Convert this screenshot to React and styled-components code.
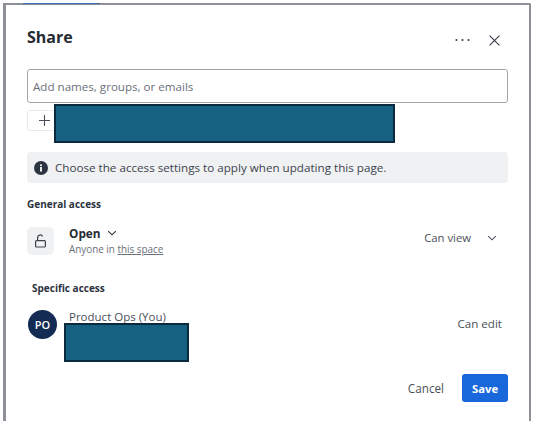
import React from 'react';
import styled, { createGlobalStyle } from 'styled-components';

const Global = createGlobalStyle`
  html, body { margin: 0; padding: 0; background: #fff; }
  body { width: 540px; height: 425px; overflow: hidden; font-family: "Open Sans", "Noto Sans", sans-serif; color: #2c3340; }
`;
const Page = styled.div`
  position: relative;
  width: 540px;
  height: 425px;
  padding: 3px 9px 0 3px;
  box-sizing: border-box;
`;
const TopAccent = styled.div`
  position: absolute;
  left: 23px;
  top: 3px;
  width: 77px;
  height: 1px;
  background: #3d6cb0;
`;
const Dialog = styled.section`
  height: 418px;
  box-sizing: border-box;
  background: #fff;
  border: solid #8d9097;
  border-width: 2px 2px 0 3px;
  border-top-right-radius: 2px;
  padding: 0 21px 0 21px;
  display: flex;
  flex-direction: column;
`;
const Header = styled.header`
  height: 64px;
  display: flex;
  align-items: center;
  justify-content: space-between;
  box-sizing: border-box;
`;
const Title = styled.h1`
  margin: 0;
  font-size: 16px;
  line-height: 24px;
  font-weight: 700;
  color: #262b33;
`;
const HeaderActions = styled.div`
  display: flex;
  align-items: center;
  gap: 19px;
  margin-right: 8px;
  margin-top: 6px;
  color: #3c424d;
`;
const SearchInput = styled.div`
  height: 34px;
  box-sizing: border-box;
  border: 1px solid #a2a5ab;
  border-radius: 3px;
  display: flex;
  align-items: center;
  padding-left: 5px;
  font-size: 11.6px;
  color: #6b7079;
`;
const AddChip = styled.div`
  position: relative;
  width: 34px;
  height: 21px;
  margin-top: 7px;
  box-sizing: border-box;
  border: 1px solid #e8e9eb;
  border-radius: 3px;
  display: flex;
  align-items: center;
  padding-left: 10px;
  color: #4a4f58;
`;
const Redaction = styled.div`
  position: absolute;
  box-sizing: border-box;
  background: #166082;
  border: 2px solid #0b2a40;
  left: ${p => p.$left}px;
  top: ${p => p.$top}px;
  width: ${p => p.$width}px;
  height: ${p => p.$height}px;
`;
const Notice = styled.div`
  margin-top: 21px;
  height: 31px;
  background: #f0f1f3;
  border-radius: 4px;
  display: flex;
  align-items: center;
  gap: 7px;
  padding-left: 7px;
  font-size: 11.65px;
  color: #3c424d;
`;
const SectionLabel = styled.h2`
  margin: ${p => p.$top}px 0 0 ${p => p.$indent || 0}px;
  font-size: 10px;
  line-height: 14px;
  font-weight: 700;
  color: #2c3340;
`;
const AccessRow = styled.div`
  display: flex;
  align-items: center;
  margin-top: ${p => p.$top}px;
`;
const LockTile = styled.div`
  width: 27px;
  height: 28px;
  border-radius: 5px;
  background: #f0f1f3;
  display: flex;
  align-items: center;
  justify-content: center;
  color: #3c424d;
`;
const Avatar = styled.div`
  width: 29px;
  height: 29px;
  margin-left: 1px;
  border-radius: 50%;
  background: #142c54;
  color: #fff;
  font-size: 11px;
  font-weight: 600;
  display: flex;
  align-items: center;
  justify-content: center;
`;
const RowText = styled.div`
  margin-left: ${p => p.$left}px;
  flex: 1;
  display: flex;
  flex-direction: column;
`;
const AccessName = styled.div`
  display: flex;
  align-items: center;
  gap: 6px;
  font-size: 11.8px;
  line-height: 16px;
  font-weight: 700;
  color: #262b33;
`;
const AccessHint = styled.div`
  font-size: 9.9px;
  line-height: 13px;
  margin-top: 2px;
  color: #6b7079;
`;
const SpaceLink = styled.span`
  text-decoration: underline;
`;
const PersonName = styled.div`
  font-size: 11.5px;
  line-height: 16px;
  margin-top: -15px;
  color: #4a4f58;
`;
const RoleSelect = styled.div`
  display: flex;
  align-items: center;
  gap: 16px;
  margin: 0 11px 6px 0;
  font-size: 11.3px;
  color: #4a4f58;
`;
const RoleText = styled.div`
  margin: -2px 6px 1px 0;
  font-size: 11.6px;
  color: #4a4f58;
`;
const Footer = styled.footer`
  margin-top: 35px;
  display: flex;
  align-items: center;
  justify-content: flex-end;
  gap: 18px;
`;
const CancelButton = styled.button`
  border: 0;
  padding: 0;
  background: none;
  font: 11.7px "Open Sans", sans-serif;
  color: #4a4f58;
`;
const SaveButton = styled.button`
  width: 46px;
  height: 28px;
  border: 0;
  padding: 0;
  border-radius: 3px;
  background: #1868db;
  color: #fff;
  font: 700 11.3px "Open Sans", sans-serif;
`;

const Chevron = ({ size = 10 }) => (
  <svg width={size} height={size} viewBox="0 0 10 10" fill="none" stroke="currentColor" strokeWidth="1.1"><path d="M1.2 3.2 5 6.8l3.8-3.6" /></svg>
);

export default function App() {
  return (
    <Page>
      <Global />
      <TopAccent />
      <Dialog>
        <Header>
          <Title>Share</Title>
          <HeaderActions>
            <svg width="15" height="4" viewBox="0 0 15 4" fill="currentColor"><circle cx="1.5" cy="2" r="1.1" /><circle cx="7.5" cy="2" r="1.1" /><circle cx="13.5" cy="2" r="1.1" /></svg>
            <svg width="11" height="11" viewBox="0 0 11 11" fill="none" stroke="currentColor" strokeWidth="1.2"><path d="M.6.6l9.8 9.8M10.4.6.6 10.4" /></svg>
          </HeaderActions>
        </Header>
        <SearchInput>Add names, groups, or emails</SearchInput>
        <AddChip>
          <svg width="13" height="13" viewBox="0 0 13 13" fill="none" stroke="currentColor" strokeWidth="1.1"><path d="M6.5 1v11M1 6.5h11" /></svg>
        </AddChip>
        <Redaction $left={54} $top={104} $width={341} $height={39} />
        <Notice>
          <svg width="14" height="14" viewBox="0 0 14 14"><circle cx="7" cy="7" r="7" fill="#2c3340" /><rect x="6.1" y="6" width="1.8" height="4.6" fill="#fff" /><rect x="6.1" y="3.4" width="1.8" height="1.7" fill="#fff" /></svg>
          Choose the access settings to apply when updating this page.
        </Notice>
        <SectionLabel $top={14}>General access</SectionLabel>
        <AccessRow $top={14}>
          <LockTile>
            <svg width="13" height="14" viewBox="0 0 13 14" fill="none" stroke="currentColor" strokeWidth="1.2"><rect x="1.6" y="6.6" width="9.8" height="6.4" rx="1" /><path d="M3.6 6.6V3.6a2.6 2.6 0 0 1 5-1" /></svg>
          </LockTile>
          <RowText $left={15}>
            <AccessName>Open <Chevron /></AccessName>
            <AccessHint>Anyone in <SpaceLink>this space</SpaceLink></AccessHint>
          </RowText>
          <RoleSelect>Can view <Chevron /></RoleSelect>
        </AccessRow>
        <SectionLabel $top={25} $indent={5}>Specific access</SectionLabel>
        <AccessRow $top={15}>
          <Avatar>PO</Avatar>
          <RowText $left={12}>
            <PersonName>Product Ops (You)</PersonName>
          </RowText>
          <RoleText>Can edit</RoleText>
        </AccessRow>
        <Redaction $left={64} $top={323} $width={125} $height={39} />
        <Footer>
          <CancelButton>Cancel</CancelButton>
          <SaveButton>Save</SaveButton>
        </Footer>
      </Dialog>
    </Page>
  );
}
